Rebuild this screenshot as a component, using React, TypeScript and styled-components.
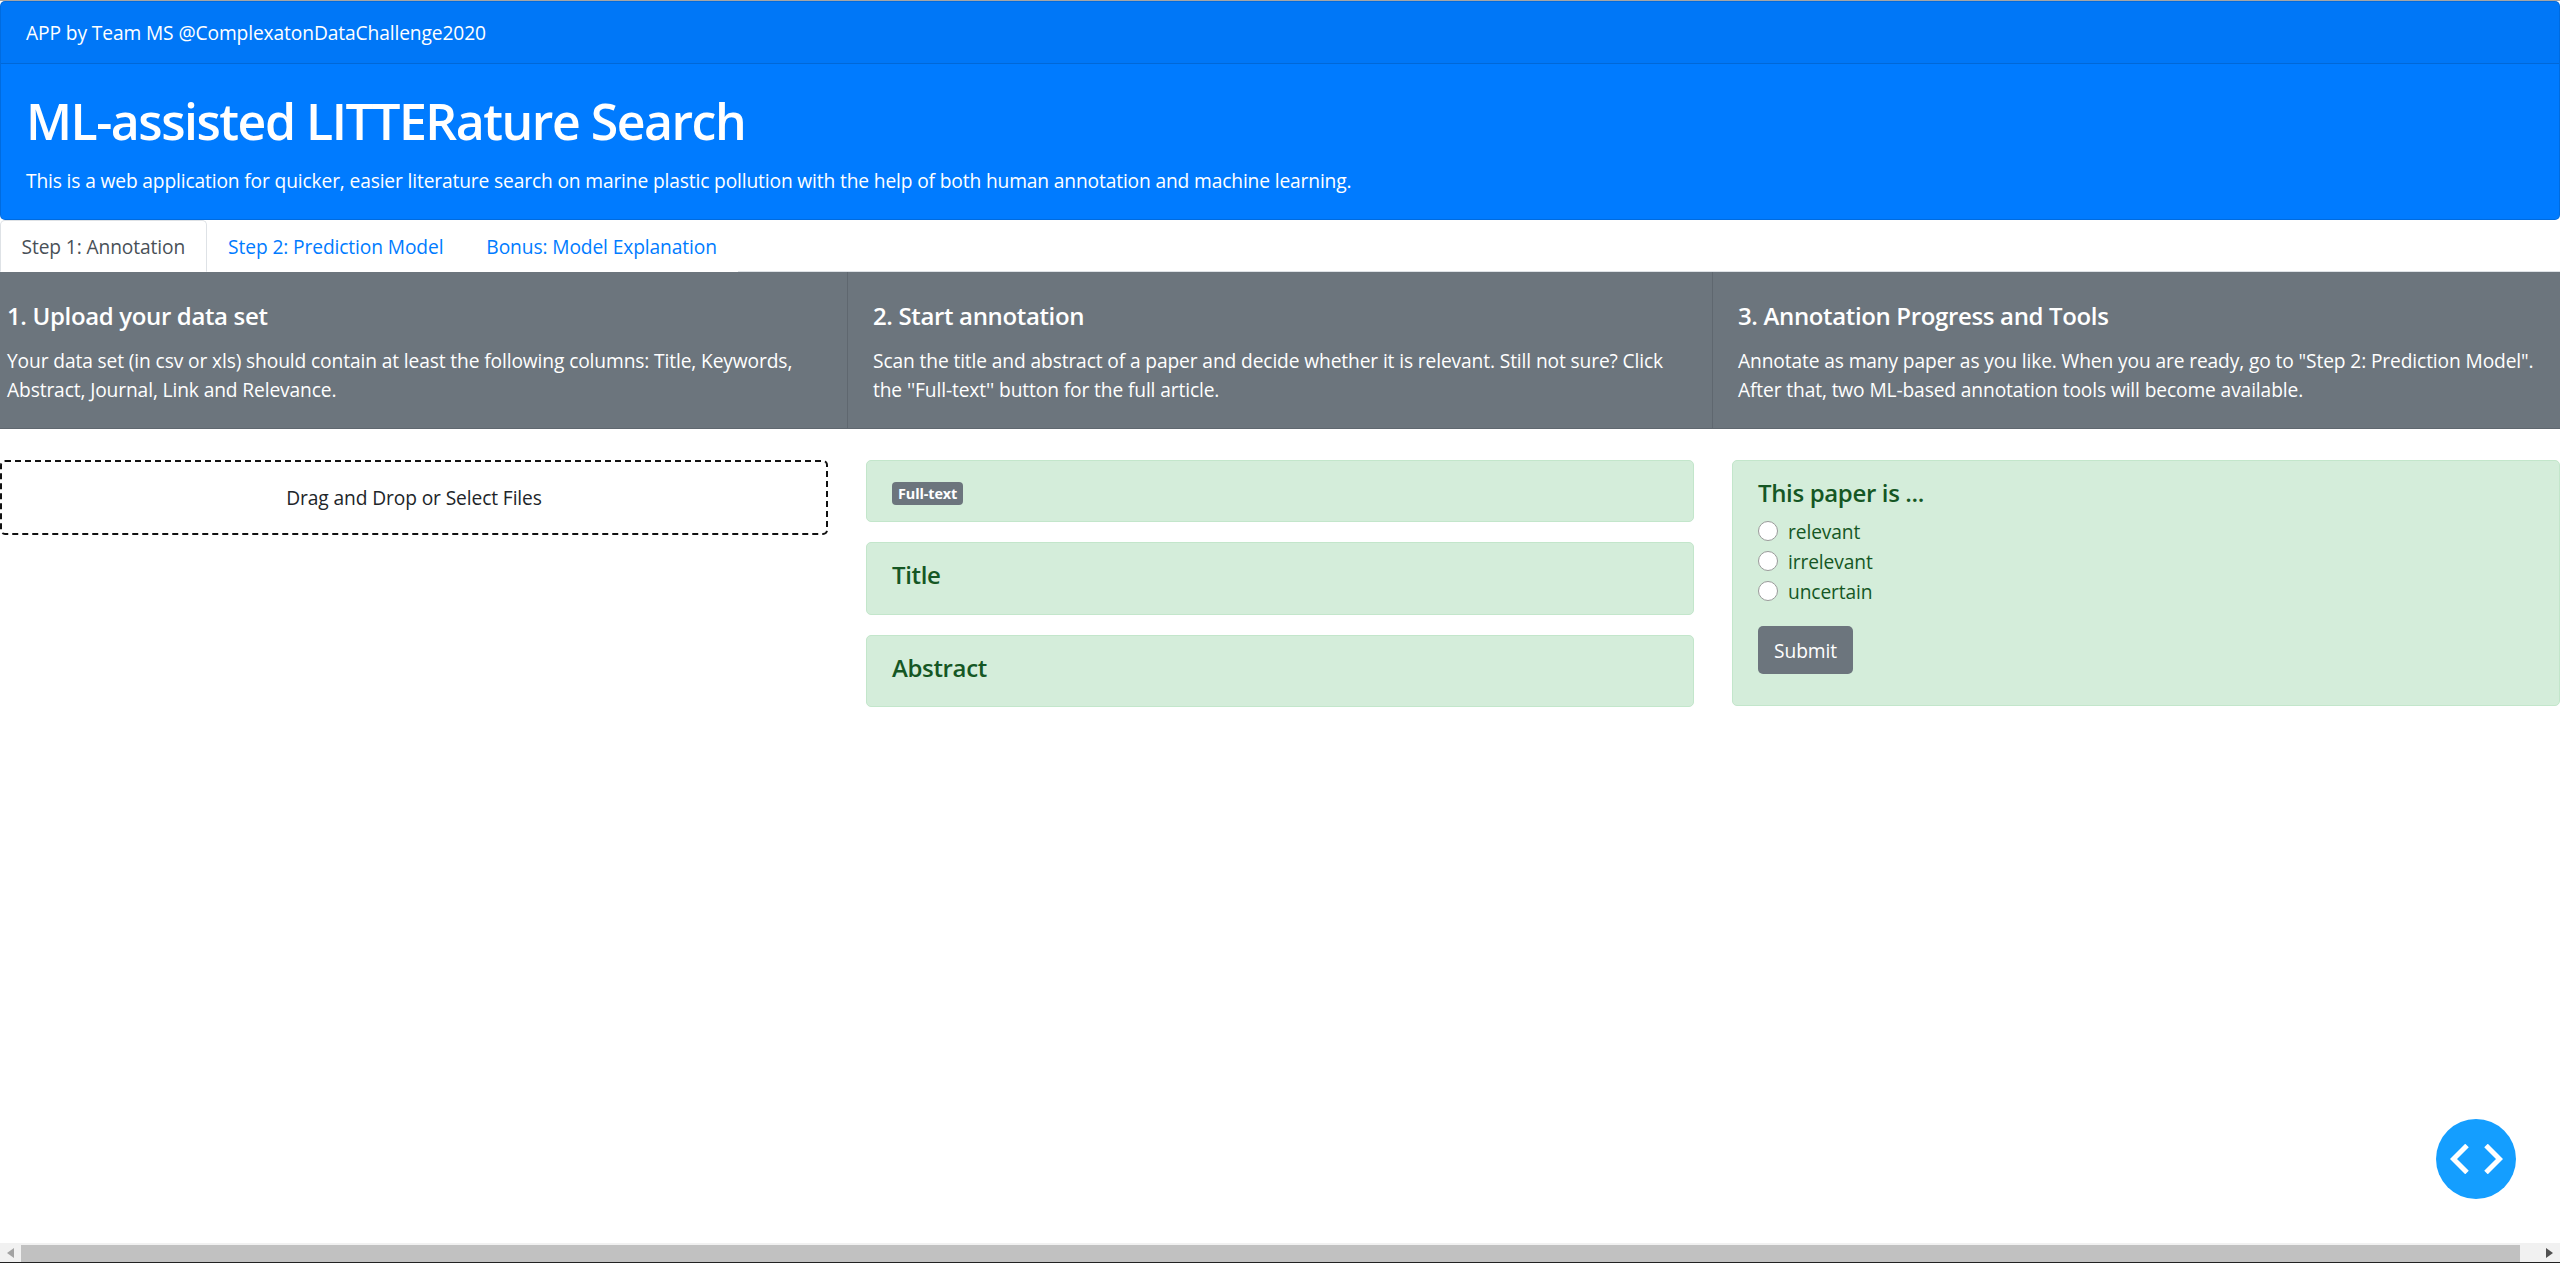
import React from "react";
import styled, { createGlobalStyle } from "styled-components";

const GlobalStyle = createGlobalStyle`
  html, body {
    margin: 0;
    padding: 0;
    background: #fff;
    overflow: hidden;
  }
  body {
    font-family: "Open Sans", "Noto Sans", sans-serif;
    font-size: 19.2px;
    letter-spacing: -0.11px;
    color: #212529;
  }
  * { box-sizing: border-box; }
`;

const Page = styled.div`
  position: relative;
  width: 2560px;
  height: 1263px;
  overflow: hidden;
  display: flex;
  flex-direction: column;
  border-top: 1px solid #a5a5a5;
`;

const Main = styled.div`
  flex: 1;
  min-height: 0;
`;

const TopCard = styled.header`
  background: #007bff;
  color: #fff;
  border: 1px solid rgba(0, 0, 0, 0.125);
  border-radius: 5px;
  height: 219px;
`;

const TopLine = styled.div`
  height: 62px;
  padding: 0 25px;
  display: flex;
  align-items: center;
  background: rgba(0, 0, 0, 0.03);
  border-bottom: 1px solid rgba(0, 0, 0, 0.125);
`;

const Hero = styled.div`
  padding: 26px 25px 0;
`;

const HeroTitle = styled.h1`
  margin: 0;
  font-size: 50px;
  line-height: 62px;
  font-weight: 600;
  letter-spacing: -1.5px;
`;

const HeroText = styled.p`
  margin: 15px 0 0;
  line-height: 28px;
  letter-spacing: -0.14px;
`;

const Tabs = styled.nav`
  display: flex;
  height: 52px;
  border-bottom: 1px solid #dee2e6;
`;

const Tab = styled.div<{ $active?: boolean }>`
  display: flex;
  align-items: center;
  height: 52px;
  padding: 0 20.5px;
  color: ${p => (p.$active ? "#495057" : "#007bff")};
  background: #fff;
  border: 1px solid ${p => (p.$active ? "#dee2e6" : "transparent")};
  border-bottom-color: ${p => (p.$active ? "#fff" : "transparent")};
  border-radius: 5px 5px 0 0;
`;

const Banner = styled.section`
  display: grid;
  grid-template-columns: 847px 865px 1fr;
  height: 157px;
  background: #6c757d;
  color: #fff;
  border-bottom: 1px solid #5f676f;
`;

const BannerCell = styled.div<{ $first?: boolean }>`
  padding: 29px 0 0 ${p => (p.$first ? "7px" : "25px")};
  border-left: ${p => (p.$first ? "none" : "1px solid #5f676f")};
`;

const BannerTitle = styled.h4`
  margin: 0 0 16px;
  font-size: 24px;
  line-height: 30px;
  font-weight: 600;
  letter-spacing: -0.35px;
`;

const BannerText = styled.p`
  margin: 0;
  line-height: 28.8px;
  letter-spacing: -0.12px;
  white-space: pre-line;
`;

const Columns = styled.div`
  display: grid;
  grid-template-columns: repeat(3, 828px);
  column-gap: 38px;
  padding-top: 31px;
  align-items: start;
`;

const DropZone = styled.div`
  height: 75px;
  border: 2px dashed #111;
  border-radius: 5px;
  display: flex;
  align-items: center;
  justify-content: center;
`;

const Stack = styled.div`
  display: flex;
  flex-direction: column;
  gap: 20px;
`;

const Alert = styled.div<{ $h: number }>`
  height: ${p => p.$h}px;
  background: #d4edda;
  border: 1px solid #c3e6cb;
  border-radius: 5px;
  color: #155724;
  padding: 0 25px;
`;

const AlertTitle = styled.h4`
  margin: 17px 0 0;
  font-size: 24px;
  line-height: 30px;
  font-weight: 600;
  letter-spacing: -0.35px;
`;

const Badge = styled.span`
  display: inline-block;
  margin-top: 21px;
  padding: 0 6px;
  height: 23px;
  line-height: 23px;
  background: #6c757d;
  color: #fff;
  border-radius: 4px;
  font-size: 14.4px;
  font-weight: 700;
  letter-spacing: -0.1px;
`;

const Radios = styled.div`
  margin-top: 8px;
`;

const RadioRow = styled.label`
  display: flex;
  align-items: center;
  height: 30px;
  gap: 10px;
`;

const RadioDot = styled.span`
  width: 20px;
  height: 20px;
  border-radius: 50%;
  background: #fff;
  border: 1px solid #9a9a9a;
`;

const SubmitButton = styled.button`
  display: block;
  margin-top: 20px;
  width: 95px;
  height: 48px;
  background: #6c757d;
  color: #fff;
  border: none;
  border-radius: 5px;
  font-family: inherit;
  font-size: inherit;
  letter-spacing: inherit;
`;

const FloatButton = styled.div`
  position: absolute;
  left: 2436px;
  top: 1118px;
  width: 80px;
  height: 80px;
  border-radius: 50%;
  background: #149eff;
  display: flex;
  align-items: center;
  justify-content: center;
`;

const ScrollBar = styled.div`
  height: 20px;
  display: flex;
  align-items: stretch;
  background: #f1f1f1;
  flex-shrink: 0;
  border-bottom: 1px solid #222;
`;

const ScrollArrow = styled.div`
  width: 21px;
  display: flex;
  align-items: center;
  justify-content: center;
`;

const ScrollThumb = styled.div`
  width: 2499px;
  margin-top: 2px;
  background: #c1c1c1;
`;

const ScrollRest = styled.div`
  flex: 1;
`;

const steps = [
  {
    title: "1. Upload your data set",
    text: "Your data set (in csv or xls) should contain at least the following columns: Title, Keywords,\nAbstract, Journal, Link and Relevance.",
  },
  {
    title: "2. Start annotation",
    text: "Scan the title and abstract of a paper and decide whether it is relevant. Still not sure? Click\nthe ''Full-text'' button for the full article.",
  },
  {
    title: "3. Annotation Progress and Tools",
    text: 'Annotate as many paper as you like. When you are ready, go to "Step 2: Prediction Model".\nAfter that, two ML-based annotation tools will become available.',
  },
];

const App: React.FC = () => {
  return (
    <Page>
      <GlobalStyle />
      <Main>
        <TopCard>
          <TopLine>APP by Team MS @ComplexatonDataChallenge2020</TopLine>
          <Hero>
            <HeroTitle>ML-assisted LITTERature Search</HeroTitle>
            <HeroText>
              This is a web application for quicker, easier literature search on marine plastic pollution with the help of both human annotation and machine learning.
            </HeroText>
          </Hero>
        </TopCard>
        <Tabs>
          <Tab $active>Step 1: Annotation</Tab>
          <Tab>Step 2: Prediction Model</Tab>
          <Tab>Bonus: Model Explanation</Tab>
        </Tabs>
        <Banner>
          {steps.map((s, i) => (
            <BannerCell key={s.title} $first={i === 0}>
              <BannerTitle>{s.title}</BannerTitle>
              <BannerText>{s.text}</BannerText>
            </BannerCell>
          ))}
        </Banner>
        <Columns>
          <DropZone>Drag and Drop or Select Files</DropZone>
          <Stack>
            <Alert $h={62}>
              <Badge>Full-text</Badge>
            </Alert>
            <Alert $h={73}>
              <AlertTitle>Title</AlertTitle>
            </Alert>
            <Alert $h={72}>
              <AlertTitle>Abstract</AlertTitle>
            </Alert>
          </Stack>
          <Alert $h={246}>
            <AlertTitle>This paper is ...</AlertTitle>
            <Radios>
              <RadioRow><RadioDot />relevant</RadioRow>
              <RadioRow><RadioDot />irrelevant</RadioRow>
              <RadioRow><RadioDot />uncertain</RadioRow>
            </Radios>
            <SubmitButton>Submit</SubmitButton>
          </Alert>
        </Columns>
      </Main>
      <FloatButton>
        <svg width="53" height="30" viewBox="0 0 53 30" fill="none" stroke="#fff" strokeWidth="5">
          <path d="M17 1.5 L3.5 15 L17 28.5" />
          <path d="M36 1.5 L49.5 15 L36 28.5" />
        </svg>
      </FloatButton>
      <ScrollBar>
        <ScrollArrow>
          <svg width="7" height="10" viewBox="0 0 7 10"><path d="M7 0 V10 L0 5 Z" fill="#a3a3a3" /></svg>
        </ScrollArrow>
        <ScrollThumb />
        <ScrollRest />
        <ScrollArrow>
          <svg width="7" height="10" viewBox="0 0 7 10"><path d="M0 0 V10 L7 5 Z" fill="#505050" /></svg>
        </ScrollArrow>
      </ScrollBar>
    </Page>
  );
};

export default App;
